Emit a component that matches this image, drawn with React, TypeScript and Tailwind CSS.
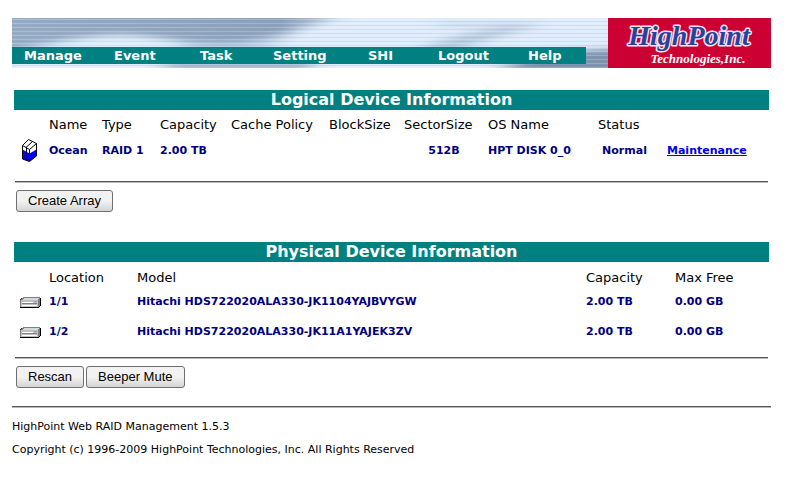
import type { ReactNode } from "react";

const menu = [
  { label: "Manage", width: "w-[90px]" },
  { label: "Event", width: "w-[86px]" },
  { label: "Task", width: "w-[73px]" },
  { label: "Setting", width: "w-[95px]" },
  { label: "SHI", width: "w-[70px]" },
  { label: "Logout", width: "w-[90px]" },
  { label: "Help", width: "w-[46px]" },
];

const disks = [
  { location: "1/1", model: "Hitachi HDS722020ALA330-JK1104YAJBVYGW" },
  { location: "1/2", model: "Hitachi HDS722020ALA330-JK11A1YAJEK3ZV" },
];

const Waves = () => (
  <svg
    className="absolute inset-0 h-full w-full"
    viewBox="0 0 596 50"
    preserveAspectRatio="none"
    aria-hidden="true"
  >
    <defs>
      <filter id="soft" x="-20%" y="-50%" width="140%" height="200%">
        <feGaussianBlur stdDeviation="10 3" />
      </filter>
      <linearGradient id="sky" x1="0" x2="1" y1="0" y2="0">
        <stop offset="0" stopColor="#97acc5" />
        <stop offset="0.45" stopColor="#8ca2bc" />
        <stop offset="0.62" stopColor="#dbe9f8" />
        <stop offset="1" stopColor="#d3e2f1" />
      </linearGradient>
      <pattern id="lines" width="4" height="4" patternUnits="userSpaceOnUse">
        <rect width="4" height="1" y="1" fill="#fff" opacity="0.2" />
        <rect width="4" height="1" y="3" fill="#6d87a4" opacity="0.12" />
      </pattern>
    </defs>
    <rect width="596" height="50" fill="url(#sky)" />
    <g filter="url(#soft)">
      <path
        d="M-20 36C30 28 60 18 105 17C150 17 180 28 225 25C270 20 300 6 345 -6H620V62H-20Z"
        fill="#dfecfb"
      />
      <path d="M160 22C210 28 240 26 285 14L250 34H180Z" fill="#c0d1e5" />
      <path d="M400 34C435 20 465 9 530 8C490 16 460 26 440 34Z" fill="#b4c6db" />
      <path d="M430 4H540L500 9H420Z" fill="#c5d6e8" />
      <path d="M470 58C510 44 530 31 570 32L620 30V60Z" fill="#7d94af" />
      <path d="M160 44H300V60H140Z" fill="#9fb3ca" />
    </g>
    <rect width="596" height="50" fill="url(#lines)" />
  </svg>
);

const Logo = () => (
  <svg
    className="h-[50px] w-[163px] shrink-0 bg-[#cc0033]"
    viewBox="0 0 163 50"
    role="img"
    aria-label="HighPoint Technologies,Inc."
  >
    <text
      x="81"
      y="27"
      textAnchor="middle"
      fontFamily="Liberation Serif, serif"
      fontSize="28"
      fontWeight="bold"
      fontStyle="italic"
      fill="#26429c"
      stroke="#f4e4f0"
      strokeWidth="3"
      strokeLinejoin="round"
      paintOrder="stroke"
    >
      HighPoint
    </text>
    <text
      x="90"
      y="45"
      textAnchor="middle"
      fontFamily="Liberation Serif, serif"
      fontSize="13"
      fontWeight="bold"
      fontStyle="italic"
      fill="#fff"
    >
      Technologies,Inc.
    </text>
  </svg>
);

const ArrayIcon = () => (
  <svg width="16" height="24" viewBox="0 0 16 24" aria-hidden="true">
    <path d="M0.5 6.5L6.5 0.5L14.5 4.5V17L7.5 22.5L0.5 20Z" fill="#fff" />
    <path d="M0.5 10.5L7.5 14.5L14.5 10.5V17L7.5 22.5L0.5 20Z" fill="#00f" />
    <path d="M4.5 12V21M7.5 14V22" stroke="#000080" />
    <path
      d="M0.5 6.5L6.5 0.5L14.5 4.5V17L7.5 22.5L0.5 20ZM0.5 6.5L7.5 10.5L14.5 4.5M4 8.5L10.5 2.5M4.5 8.5V12M7.5 10.5V14"
      fill="none"
      stroke="#000"
    />
  </svg>
);

const DiskIcon = () => (
  <svg width="21" height="11" viewBox="0 0 21 11" shapeRendering="crispEdges" aria-hidden="true">
    <path d="M0 3L3 0H20V10H0Z" fill="#808080" />
    <path d="M2 3L4 1H19L18 3Z" fill="#d8d8d8" />
    <path d="M1 3H18V10H1Z" fill="#c0c0c0" />
    <path d="M2 5H13V6H2ZM2 8H17V9H2Z" fill="#fff" />
    <path d="M2 6H17V7H2Z" fill="#808080" />
    <path d="M14 4H17V5H14Z" fill="#00e0e0" />
    <path d="M1 1H2V2H1ZM0 2H1V3H0Z" fill="#800080" />
    <path d="M0 10H19V11H0ZM19 9H20V10H19ZM20 1H21V9H20Z" fill="#000" />
  </svg>
);

const SectionTitle = ({ children }: { children: ReactNode }) => (
  <h2 className="h-5 bg-[#008080] text-center text-base leading-5 font-bold text-white">
    {children}
  </h2>
);

const Rule = () => (
  <hr className="h-[2px] border-0 border-t border-b border-t-[#585858] border-b-[#b8b8b8]" />
);

const Button = ({ children }: { children: ReactNode }) => (
  <button
    type="button"
    className="h-[22px] rounded-[3px] border border-[#707070] bg-linear-to-b from-[#f2f2f2] from-50% to-[#d4d4d4] px-[11px] font-['Liberation_Sans',sans-serif] text-[13px] leading-5 text-black"
  >
    {children}
  </button>
);

export default function App() {
  return (
    <div className="bg-white pt-[18px] pr-[17px] pb-10 pl-3 font-['DejaVu_Sans',sans-serif] text-[13px] text-black">
      <header className="flex">
        <div className="relative min-w-0 flex-1 overflow-hidden">
          <Waves />
          <nav className="relative mt-[29px] mr-[22px] flex h-[17px] bg-[#008080] pl-3 leading-[17px] font-bold text-white">
            {menu.map((item) => (
              <a key={item.label} href="#" className={item.width}>
                {item.label}
              </a>
            ))}
          </nav>
        </div>
        <Logo />
      </header>

      <main className="px-[2px] pt-[22px]">
        <section>
          <SectionTitle>Logical Device Information</SectionTitle>
          <table className="w-full table-fixed text-left">
            <colgroup>
              <col className="w-[35px]" />
              <col className="w-[53px]" />
              <col className="w-[58px]" />
              <col className="w-[71px]" />
              <col className="w-[98px]" />
              <col className="w-[75px]" />
              <col className="w-[84px]" />
              <col className="w-[110px]" />
              <col className="w-[69px]" />
              <col />
            </colgroup>
            <thead>
              <tr className="h-[29px] whitespace-nowrap *:font-normal">
                <td></td>
                <th>Name</th>
                <th>Type</th>
                <th>Capacity</th>
                <th>Cache Policy</th>
                <th>BlockSize</th>
                <th>SectorSize</th>
                <th>OS Name</th>
                <th>Status</th>
                <td></td>
              </tr>
            </thead>
            <tbody className="text-[11px] font-bold whitespace-nowrap text-[#000080]">
              <tr className="h-6">
                <td className="pl-2">
                  <ArrayIcon />
                </td>
                <td>Ocean</td>
                <td>RAID 1</td>
                <td>2.00 TB</td>
                <td></td>
                <td></td>
                <td className="pr-1 text-center">512B</td>
                <td>HPT DISK 0_0</td>
                <td className="pr-4 text-center">Normal</td>
                <td>
                  <a href="#" className="text-[#0000ee] underline">
                    Maintenance
                  </a>
                </td>
              </tr>
            </tbody>
          </table>
          <div className="px-px pt-[18px]">
            <Rule />
            <div className="flex px-px pt-[7px]">
              <Button>Create Array</Button>
            </div>
          </div>
        </section>

        <section className="pt-[30px]">
          <SectionTitle>Physical Device Information</SectionTitle>
          <table className="w-full table-fixed text-left">
            <colgroup>
              <col className="w-[35px]" />
              <col className="w-[88px]" />
              <col />
              <col className="w-[89px]" />
              <col className="w-[94px]" />
            </colgroup>
            <thead>
              <tr className="h-[25px] align-bottom *:font-normal">
                <td></td>
                <th>Location</th>
                <th>Model</th>
                <th>Capacity</th>
                <th>Max Free</th>
              </tr>
            </thead>
            <tbody className="text-[11px] font-bold whitespace-nowrap text-[#000080]">
              {disks.map((disk) => (
                <tr key={disk.location} className="h-[30px]">
                  <td className="pl-[6px]">
                    <DiskIcon />
                  </td>
                  <td>{disk.location}</td>
                  <td>{disk.model}</td>
                  <td>2.00 TB</td>
                  <td>0.00 GB</td>
                </tr>
              ))}
            </tbody>
          </table>
          <div className="px-px pt-[10px]">
            <Rule />
            <div className="flex gap-[2px] px-px pt-[7px]">
              <Button>Rescan</Button>
              <Button>Beeper Mute</Button>
            </div>
          </div>
        </section>
      </main>

      <footer className="pt-[18px] text-[11px] leading-[23px]">
        <Rule />
        <p className="pt-[7px]">HighPoint Web RAID Management 1.5.3</p>
        <p>Copyright (c) 1996-2009 HighPoint Technologies, Inc. All Rights Reserved</p>
      </footer>
    </div>
  );
}
